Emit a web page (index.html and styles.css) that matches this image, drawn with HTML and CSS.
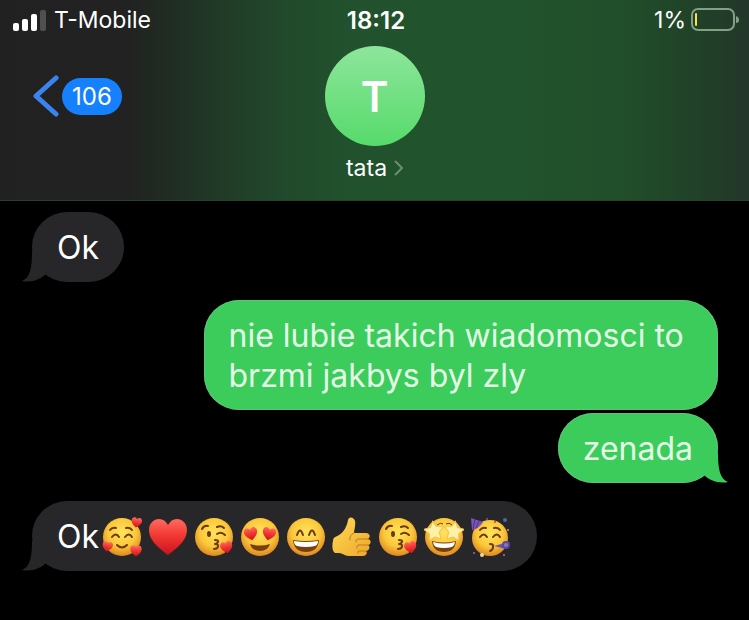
FILE: index.html
```html
<!DOCTYPE html>
<html lang="pl">
<head>
<meta charset="utf-8">
<meta name="viewport" content="width=device-width, initial-scale=1">
<title>tata</title>
<link rel="stylesheet" href="styles.css">
</head>
<body>
<svg class="defs" aria-hidden="true">
  <defs>
    <radialGradient id="face" cx="0.5" cy="0.38" r="0.62">
      <stop offset="0" stop-color="#ffe45c"/>
      <stop offset="0.6" stop-color="#fbc73a"/>
      <stop offset="1" stop-color="#dd8720"/>
    </radialGradient>
    <linearGradient id="red" x1="0" y1="0" x2="0" y2="1">
      <stop offset="0" stop-color="#ff6a5e"/>
      <stop offset="0.5" stop-color="#f03430"/>
      <stop offset="1" stop-color="#c81420"/>
    </linearGradient>
    <linearGradient id="hand" x1="0" y1="0" x2="1" y2="1">
      <stop offset="0" stop-color="#ffdc55"/>
      <stop offset="1" stop-color="#eda52c"/>
    </linearGradient>
    <symbol id="heart" viewBox="0 0 40 40">
      <path fill="url(#red)" d="M20 38C15 34 1 25 1 13C1 6 6 2 11 2C15 2 18 4 20 8C22 4 25 2 29 2C34 2 39 6 39 13C39 25 25 34 20 38Z"/>
    </symbol>
    <symbol id="kiss" viewBox="0 0 40 40">
      <circle cx="20" cy="20" r="19" fill="url(#face)"/>
      <ellipse cx="15" cy="17" rx="2" ry="3" fill="#6b3a10"/>
      <g fill="none" stroke="#6b3a10" stroke-width="2" stroke-linecap="round" stroke-linejoin="round">
        <path d="M8 12Q10 8 14 9M23 10Q27 8 30 11"/>
        <path d="M23 17Q27 14 31 18"/>
        <path d="M21 23Q25 23 24 25Q23 27 21 27Q25 27 24 30Q23 32 20 32"/>
      </g>
      <use href="#heart" x="26" y="24" width="13" height="13" transform="rotate(-12 32 30)"/>
    </symbol>
    <path id="star" fill="#fff0a8" stroke="#f0c34c" stroke-width="1" stroke-linejoin="round" d="M0 -10L3 -4L10 -3L5 2L6 9L0 6L-6 9L-5 2L-10 -3L-3 -4Z"/>
  </defs>
</svg>

<header class="top">
  <div class="status">
    <div class="carrier">
      <svg class="signal" viewBox="0 0 34 22" aria-hidden="true">
        <rect x="0" y="14" width="6" height="8" rx="2" fill="#fff"/>
        <rect x="9" y="10" width="6" height="12" rx="2" fill="#fff"/>
        <rect x="18" y="5" width="6" height="17" rx="2" fill="#fff"/>
        <rect x="27" y="1" width="6" height="21" rx="2" fill="#505050"/>
      </svg>
      <span>T-Mobile</span>
    </div>
    <time class="clock">18:12</time>
    <div class="power">
      <span>1%</span>
      <svg class="battery" viewBox="0 0 48 24" aria-hidden="true">
        <rect x="1" y="1" width="42" height="21" rx="6" fill="none" stroke="#82a083" stroke-width="2"/>
        <rect x="4" y="5" width="2" height="13" rx="1" fill="#ffe050"/>
        <path d="M45 8Q48 9 48 12Q48 15 45 15Z" fill="#82a083"/>
      </svg>
    </div>
  </div>
  <nav class="nav">
    <button class="back" type="button">
      <svg class="chevron" viewBox="0 0 26 42" aria-hidden="true"><path d="M23 3L3 21L23 39" fill="none" stroke="#3b83ee" stroke-width="5" stroke-linecap="round" stroke-linejoin="round"/></svg>
      <span class="count">106</span>
    </button>
    <button class="contact" type="button">
      <span class="avatar">T</span>
      <span class="name">tata
        <svg class="more" viewBox="0 0 10 16" aria-hidden="true"><path d="M2 1L9 8L2 15" fill="none" stroke="#6b8f70" stroke-width="2"/></svg>
      </span>
    </button>
  </nav>
</header>

<main class="thread">
  <div class="bubble in">Ok
    <svg class="tail" viewBox="0 0 32 30" aria-hidden="true"><path d="M10 0C10 16 8 26 0 29C10 31 19 27 24 22L32 14V0Z"/></svg>
  </div>
  <div class="bubble out">nie lubie takich wiadomosci to brzmi jakbys byl zly</div>
  <div class="bubble out joined">zenada
    <svg class="tail" viewBox="0 0 32 30" aria-hidden="true"><path d="M10 0C10 16 8 26 0 29C10 31 19 27 24 22L32 14V0Z"/></svg>
  </div>
  <div class="bubble in">
    <span>Ok</span>
    <span class="emojis">
      <svg viewBox="0 0 40 40" role="img" aria-label="🥰">
        <circle cx="20" cy="20" r="19" fill="url(#face)"/>
        <g fill="none" stroke="#6b3a10" stroke-width="2" stroke-linecap="round">
          <path d="M8 13Q10 10 14 11M24 11Q28 10 30 13"/>
          <path d="M10 20Q14 15 17 20M23 20Q27 15 30 20"/>
          <path d="M15 28Q20 33 25 28"/>
        </g>
        <use href="#heart" x="29" y="0" width="11" height="11" transform="rotate(8 34 6)"/>
        <use href="#heart" x="0" y="24" width="11" height="11" transform="rotate(12 5 29)"/>
        <use href="#heart" x="28" y="28" width="12" height="12"/>
      </svg>
      <svg viewBox="0 0 40 40" role="img" aria-label="❤️"><use href="#heart" width="40" height="40"/></svg>
      <svg viewBox="0 0 40 40" role="img" aria-label="😘"><use href="#kiss" width="40" height="40"/></svg>
      <svg viewBox="0 0 40 40" role="img" aria-label="😍">
        <circle cx="20" cy="20" r="19" fill="url(#face)"/>
        <use href="#heart" x="4" y="10" width="14" height="14" transform="rotate(-12 11 17)"/>
        <use href="#heart" x="22" y="10" width="14" height="14" transform="rotate(12 29 17)"/>
        <path d="M10 27Q20 30 30 27Q28 34 20 34Q12 34 10 27Z" fill="#79400f"/>
      </svg>
      <svg viewBox="0 0 40 40" role="img" aria-label="😄">
        <circle cx="20" cy="20" r="19" fill="url(#face)"/>
        <path d="M11 18Q14 9 17 18M23 18Q26 9 29 18" fill="none" stroke="#6b3a10" stroke-width="2" stroke-linecap="round"/>
        <path d="M7 23Q20 25 33 23Q32 35 20 35Q8 35 7 23Z" fill="#79400f"/>
        <path d="M8 24Q20 26 32 24Q32 28 29 29Q20 31 11 29Q8 28 8 24Z" fill="#fff"/>
      </svg>
      <svg viewBox="0 0 40 40" role="img" aria-label="👍">
        <path fill="url(#hand)" d="M1 24C1 20 4 20 7 18C12 15 15 9 16 3C17 -1 22 0 23 4C24 8 22 13 22 16H34C38 16 39 20 36 22C40 23 39 28 36 28C39 30 37 34 34 34C36 36 34 39 31 39H17C12 39 11 36 7 36H3C0 34 0 28 1 24Z"/>
        <path d="M36 22H27Q23 22 24 25M36 28H27Q24 28 25 31M34 34H27Q25 34 26 36M22 16Q17 18 18 23" fill="none" stroke="#c17b18" stroke-width="1" stroke-linecap="round"/>
      </svg>
      <svg viewBox="0 0 40 40" role="img" aria-label="😘"><use href="#kiss" width="40" height="40"/></svg>
      <svg viewBox="0 0 40 40" role="img" aria-label="🤩">
        <circle cx="20" cy="20" r="19" fill="url(#face)"/>
        <path d="M13 8Q17 5 19 7M22 7Q25 5 28 8" fill="none" stroke="#6b3a10" stroke-width="1"/>
        <use href="#star" transform="translate(10 14) rotate(-8)"/>
        <use href="#star" transform="translate(30 14) rotate(8)"/>
        <path d="M8 24Q20 27 32 24Q31 35 20 35Q9 35 8 24Z" fill="#79400f"/>
        <path d="M9 25Q20 28 31 25Q31 28 28 30Q20 32 12 30Q9 28 9 25Z" fill="#fff"/>
      </svg>
      <svg viewBox="0 0 40 40" role="img" aria-label="🥳">
        <circle cx="20" cy="21" r="18" fill="url(#face)"/>
        <path d="M1 1L13 5Q9 12 2 13Z" fill="#7a55b8"/>
        <path d="M5 2L3 12M9 4L6 11" stroke="#4b3389" stroke-width="1"/>
        <g fill="none" stroke="#6b3a10" stroke-width="2" stroke-linecap="round">
          <path d="M10 13Q12 10 16 11M24 11Q28 10 30 13"/>
          <path d="M10 20Q14 15 17 20M23 20Q27 15 30 20"/>
          <path d="M20 27Q24 27 23 30Q23 33 20 34"/>
        </g>
        <path d="M24 29L35 26L36 32Z" fill="#665aa8"/>
        <circle cx="36" cy="28" r="4" fill="#584a9c"/>
        <circle cx="36" cy="28" r="2" fill="#8c74c6"/>
        <circle cx="35" cy="3" r="2" fill="#4569a8"/>
        <circle cx="25" cy="5" r="1" fill="#c84040"/>
        <circle cx="17" cy="2" r="1" fill="#7a55b8"/>
        <circle cx="38" cy="13" r="1" fill="#e0a048"/>
        <circle cx="4" cy="36" r="1" fill="#d35a8a"/>
        <circle cx="12" cy="38" r="2" fill="#ead9a0"/>
        <circle cx="34" cy="38" r="1" fill="#c86496"/>
      </svg>
    </span>
    <svg class="tail" viewBox="0 0 32 30" aria-hidden="true"><path d="M10 0C10 16 8 26 0 29C10 31 19 27 24 22L32 14V0Z"/></svg>
  </div>
</main>
</body>
</html>
```
FILE: styles.css
```css
* { box-sizing: border-box; }

body {
  margin: 0;
  min-height: 100vh;
  background: #000;
  color: #fff;
  font-family: Inter, "Liberation Sans", sans-serif;
}

button {
  padding: 0;
  border: 0;
  background: none;
  color: inherit;
  font: inherit;
}

svg { display: block; flex: none; }

.defs { position: absolute; width: 0; height: 0; }

.top {
  background: linear-gradient(90deg, #212121 0%, #212221 17%, #202d23 23%, #213d28 31%, #21492b 38%, #21522d 47%, #21542d 68%, #214d2a 84%, #214128 93%, #23372a 100%);
  border-bottom: 1px solid #28412d;
}

.status {
  display: grid;
  grid-template-columns: 1fr auto 1fr;
  align-items: center;
  height: 40px;
  padding: 0 10px 0 13px;
  font-size: 23px;
}

.carrier, .power { display: flex; align-items: center; }
.carrier { gap: 7px; }
.power { justify-content: flex-end; gap: 5px; }
.signal { width: 34px; height: 22px; }
.battery { width: 48px; height: 24px; }
.clock { font-size: 24px; font-weight: 600; }

.nav {
  display: grid;
  grid-template-columns: 1fr auto 1fr;
  align-items: start;
  padding: 6px 33px 0;
}

.back {
  display: flex;
  align-items: center;
  justify-self: start;
  gap: 3px;
  height: 100px;
}

.chevron { width: 26px; height: 42px; }

.count {
  padding: 0 10px;
  border-radius: 19px;
  background: #1681ff;
  font-size: 24px;
  line-height: 37px;
}

.contact { display: flex; flex-direction: column; align-items: center; }

.avatar {
  width: 100px;
  height: 100px;
  border-radius: 50%;
  background: linear-gradient(#8de69b, #57da6b);
  font-size: 42px;
  font-weight: 600;
  line-height: 102px;
}

.name {
  display: flex;
  align-items: center;
  gap: 6px;
  height: 54px;
  padding-bottom: 10px;
  font-size: 23px;
}

.more { width: 10px; height: 16px; }

.thread {
  display: flex;
  flex-direction: column;
  align-items: flex-start;
  gap: 18px;
  padding: 11px 31px 48px 32px;
}

.bubble {
  position: relative;
  display: flex;
  align-items: center;
  max-width: 75%;
  padding: 16px 25px 14px;
  border-radius: 35px;
  font-size: 32px;
  line-height: 40px;
}

.in { background: #27272a; }

.out {
  align-self: flex-end;
  background: #3bcc5c;
  color: #e4fbe6;
  box-shadow: inset 0 0 1px 1px #62c27a;
}

.joined { margin-top: -15px; }

.emojis { display: flex; gap: 6px; margin: 0 2px 0 3px; }
.emojis svg { width: 40px; height: 40px; }

.tail {
  position: absolute;
  bottom: 0;
  left: -10px;
  width: 32px;
  height: 30px;
  fill: #27272a;
}

.out .tail {
  right: -10px;
  left: auto;
  fill: #3bcc5c;
  transform: scaleX(-1);
}
```
